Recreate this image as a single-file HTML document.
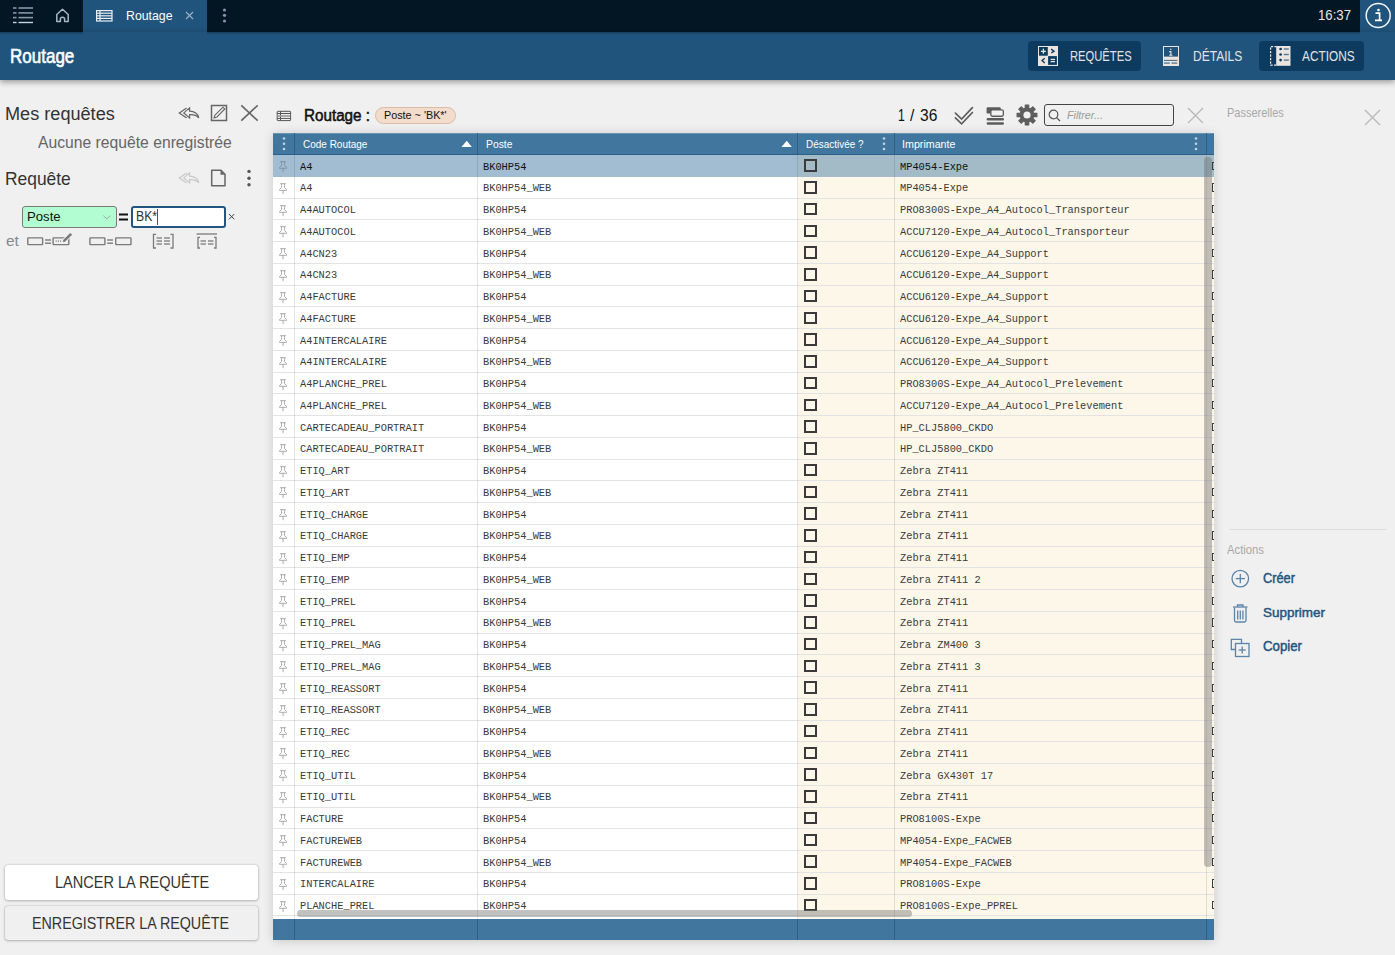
<!DOCTYPE html>
<html><head><meta charset="utf-8">
<style>
*{box-sizing:border-box;margin:0;padding:0}
html,body{width:1395px;height:955px;overflow:hidden;background:#f0f0f0;font-family:"Liberation Sans",sans-serif;position:relative}
.a{position:absolute}
.tx{position:absolute;white-space:nowrap}
svg{overflow:visible}
</style></head><body>
<div class="a" style="left:0px;top:0px;width:1395px;height:32px;background:#021624"></div>
<svg class="a" style="left:0;top:0" width="80" height="32"><g stroke="#8797a8" stroke-width="1.6"><line x1="13" y1="8" x2="16.5" y2="8"/><line x1="18.5" y1="8" x2="33" y2="8"/><line x1="13" y1="12.9" x2="16.5" y2="12.9"/><line x1="18.5" y1="12.9" x2="33" y2="12.9"/><line x1="13" y1="17.6" x2="16.5" y2="17.6"/><line x1="18.5" y1="17.6" x2="33" y2="17.6"/></g><g stroke="#c5d3e0" stroke-width="1.4"><line x1="13" y1="22.5" x2="16.5" y2="22.5"/><line x1="18.5" y1="22.5" x2="33" y2="22.5"/></g><path d="M56.8 21.5 V14.5 L62.5 9.3 L68.2 14.5 V21.5 H64.6 V18.2 Q62.5 16.3 60.4 18.2 V21.5 Z" fill="none" stroke="#a9b6c3" stroke-width="1.5" stroke-linejoin="round"/></svg>
<div class="a" style="left:83px;top:0px;width:124px;height:32px;background:#20547c"></div>
<svg class="a" style="left:94px;top:8px" width="20" height="16"><g fill="none" stroke="#e8eef4" stroke-width="1.2"><rect x="2.6" y="2.6" width="15.4" height="10.4"/><line x1="2.6" y1="5.2" x2="18" y2="5.2"/><line x1="2.6" y1="7.8" x2="18" y2="7.8"/><line x1="2.6" y1="10.4" x2="18" y2="10.4"/><line x1="6" y1="2.6" x2="6" y2="13"/></g></svg>
<div id="t1" class="tx" style='left:125.50px;top:9.00px;font-size:13.23px;line-height:13.23px;color:#ffffff;font-family:"Liberation Sans", sans-serif;font-weight:normal;transform:scaleX(0.9303);transform-origin:0 0;'>Routage</div>
<svg class="a" style="left:184px;top:10px" width="12" height="12"><g stroke="#9fb4c8" stroke-width="1.1"><line x1="2" y1="2" x2="9" y2="9"/><line x1="9" y1="2" x2="2" y2="9"/></g></svg>
<svg class="a" style="left:220px;top:6px" width="10" height="20"><g fill="#8393a4"><circle cx="4.5" cy="4" r="1.6"/><circle cx="4.5" cy="9.3" r="1.6"/><circle cx="4.5" cy="15" r="1.6"/></g></svg>
<div id="t2" class="tx" style='left:1318.00px;top:7.75px;font-size:14.17px;line-height:14.17px;color:#e8e8e8;font-family:"Liberation Sans", sans-serif;font-weight:normal;transform:scaleX(0.9312);transform-origin:0 0;'>16:37</div>
<div class="a" style="left:1360px;top:0px;width:35px;height:32px;background:#20547c"></div>
<svg class="a" style="left:1360px;top:0" width="35" height="32"><circle cx="18.2" cy="15.5" r="12" fill="none" stroke="#f4f6f8" stroke-width="1.5"/><circle cx="18.5" cy="10" r="1.3" fill="#fff"/><path d="M15.5 13.2 H19.6 V20.3 H21.8 M15 20.3 H22" fill="none" stroke="#fff" stroke-width="1.7"/></svg>
<div class="a" style="left:0px;top:32px;width:1395px;height:48px;background:#20547c;box-shadow:0 2px 6px rgba(0,0,0,.38)"></div>
<div class="a" style="left:0px;top:32px;width:83px;height:3px;background:linear-gradient(rgba(0,0,0,.28),rgba(0,0,0,0))"></div>
<div class="a" style="left:207px;top:32px;width:1153px;height:3px;background:linear-gradient(rgba(0,0,0,.28),rgba(0,0,0,0))"></div>
<div id="t3" class="tx" style='left:10.00px;top:46.00px;font-size:20.06px;line-height:20.06px;color:#ffffff;font-family:"Liberation Sans", sans-serif;font-weight:normal;transform:scaleX(0.8483);transform-origin:0 0;-webkit-text-stroke:.6px #fff'>Routage</div>
<div class="a" style="left:1028px;top:41px;width:113px;height:30px;background:#0d3b60;border-radius:4px"></div>
<div class="a" style="left:1259px;top:41px;width:105px;height:30px;background:#0d3b60;border-radius:4px"></div>
<svg class="a" style="left:1038px;top:46px" width="20" height="20"><rect x="0" y="0" width="20" height="20" fill="#ebe4df"/><rect x="1" y="1" width="8.8" height="8.7" fill="#0d3b60"/><rect x="10.1" y="10.1" width="8.8" height="8.8" fill="#0d3b60"/><g stroke="#ebe4df" stroke-width="1.3"><line x1="2.9" y1="5.4" x2="7.9" y2="5.4"/><line x1="5.4" y1="2.7" x2="5.4" y2="7.7"/><line x1="12.6" y1="13.4" x2="17" y2="13.4"/><line x1="12.6" y1="15.6" x2="17" y2="15.6"/></g><g stroke="#0d3b60" stroke-width="1.4" fill="none"><path d="M13.1 3.2 L16 5.2 L13.3 7"/><path d="M6.7 12.3 L4.1 14.6 L6.7 16.9"/></g></svg>
<svg class="a" style="left:1163px;top:46px" width="16" height="20"><rect x="0" y="0" width="16" height="20" fill="#ebe4df"/><rect x="1" y="1" width="14" height="9.6" fill="#20547c"/><circle cx="7.8" cy="3.3" r=".75" fill="#ebe4df"/><path d="M6.2 5.6 H7.9 V9.3 M6.3 9.3 H9.4" stroke="#ebe4df" stroke-width="1.1" fill="none"/><line x1="1" y1="14.4" x2="14.5" y2="14.4" stroke="#3b6789" stroke-width="1"/><g stroke="#5a7d99" stroke-width="1.4"><line x1="1" y1="17.1" x2="6.8" y2="17.1"/><line x1="8.5" y1="17.1" x2="14.3" y2="17.1"/></g></svg>
<svg class="a" style="left:1270px;top:46px" width="21" height="20"><rect x="6.2" y="0" width="14.3" height="19.8" fill="#ebe4df"/><path d="M6.6 0.6 H0.6 V19.2 H6.6" fill="none" stroke="#ebe4df" stroke-width="1.2" stroke-dasharray="2.2 1.3"/><g fill="#0d3b60"><circle cx="10.6" cy="3" r="1.35"/><circle cx="10.6" cy="8.5" r="1.35"/><circle cx="10.6" cy="14.1" r="1.35"/></g><g stroke="#557896" stroke-width="1.4"><line x1="13.8" y1="3" x2="18.8" y2="3"/><line x1="13.8" y1="8.5" x2="18.8" y2="8.5"/><line x1="13.8" y1="14.1" x2="18.8" y2="14.1"/></g></svg>
<div id="t4" class="tx" style='left:1070.00px;top:48.01px;font-size:15.12px;line-height:15.12px;color:#e3e3e3;font-family:"Liberation Sans", sans-serif;font-weight:normal;transform:scaleX(0.7411);transform-origin:0 0;'>REQUÊTES</div>
<div id="t5" class="tx" style='left:1192.60px;top:48.01px;font-size:15.12px;line-height:15.12px;color:#e3e3e3;font-family:"Liberation Sans", sans-serif;font-weight:normal;transform:scaleX(0.7954);transform-origin:0 0;'>DÉTAILS</div>
<div id="t6" class="tx" style='left:1302.00px;top:48.01px;font-size:15.12px;line-height:15.12px;color:#e3e3e3;font-family:"Liberation Sans", sans-serif;font-weight:normal;transform:scaleX(0.7846);transform-origin:0 0;'>ACTIONS</div>
<div id="t7" class="tx" style='left:5.40px;top:104.91px;font-size:18.75px;line-height:18.75px;color:#333;font-family:"Liberation Sans", sans-serif;font-weight:normal;transform:scaleX(0.9665);transform-origin:0 0;'>Mes requêtes</div>
<div id="t8" class="tx" style='left:37.90px;top:134.90px;font-size:15.99px;line-height:15.99px;color:#666;font-family:"Liberation Sans", sans-serif;font-weight:normal;transform:scaleX(0.9818);transform-origin:0 0;'>Aucune requête enregistrée</div>
<div id="t9" class="tx" style='left:5.40px;top:169.51px;font-size:18.17px;line-height:18.17px;color:#333;font-family:"Liberation Sans", sans-serif;font-weight:normal;transform:scaleX(0.9584);transform-origin:0 0;'>Requête</div>
<svg class="a" style="left:178px;top:106px" width="24" height="16"><g fill="none" stroke="#666" stroke-width="1.2" stroke-linejoin="miter"><path d="M8.6 1.9 L1.3 6.9 L8.6 12"/><path d="M11.6 1.9 L5.8 6.9 L11.6 12 V8.6 C15 8.4 18.5 9.2 20.8 11.8 C19.8 7.8 16.5 5.4 11.6 5.2 Z"/></g></svg>
<svg class="a" style="left:210px;top:104px" width="18" height="18"><rect x="1.5" y="1.5" width="15" height="15" fill="none" stroke="#666" stroke-width="1.5"/><path d="M4 14 L5 11 L13 3.2 L14.8 5 L7 13 Z" fill="none" stroke="#666" stroke-width="1.1"/></svg>
<svg class="a" style="left:240px;top:104px" width="19" height="18"><g stroke="#666" stroke-width="1.6"><line x1="1.3" y1="1.3" x2="17.7" y2="16.7"/><line x1="17.7" y1="1.3" x2="1.3" y2="16.7"/></g></svg>
<svg class="a" style="left:177.5px;top:171px" width="24" height="16"><g fill="none" stroke="#c8c8c8" stroke-width="1.2" stroke-linejoin="miter"><path d="M8.6 1.9 L1.3 6.9 L8.6 12"/><path d="M11.6 1.9 L5.8 6.9 L11.6 12 V8.6 C15 8.4 18.5 9.2 20.8 11.8 C19.8 7.8 16.5 5.4 11.6 5.2 Z"/></g></svg>
<svg class="a" style="left:210px;top:169px" width="17" height="18"><path d="M1.7 1.2 H11 L15 5.2 V16.8 H1.7 Z" fill="none" stroke="#666" stroke-width="1.5" stroke-linejoin="round"/><path d="M10.5 1.2 V5.7 H15 Z" fill="#666"/></svg>
<svg class="a" style="left:245px;top:168px" width="8" height="20"><g fill="#555"><circle cx="4" cy="3.4" r="1.7"/><circle cx="4" cy="10.2" r="1.7"/><circle cx="4" cy="16.7" r="1.7"/></g></svg>
<div class="a" style="left:21.5px;top:206px;width:95.5px;height:21.5px;background:#b3fdd2;border:1px solid #7a7a7a;border-radius:3px"></div>
<div id="t10" class="tx" style='left:26.60px;top:210.31px;font-size:13.52px;line-height:13.52px;color:#111;font-family:"Liberation Sans", sans-serif;font-weight:normal;transform:scaleX(0.9722);transform-origin:0 0;'>Poste</div>
<svg class="a" style="left:102px;top:214px" width="10" height="7"><path d="M1.3 1.5 L4.8 5 L8.3 1.5" fill="none" stroke="#9aa" stroke-width="1"/></svg>
<svg class="a" style="left:118px;top:212px" width="12" height="10"><g stroke="#111" stroke-width="2"><line x1="1" y1="2.5" x2="10" y2="2.5"/><line x1="1" y1="7.5" x2="10" y2="7.5"/></g></svg>
<div class="a" style="left:130.5px;top:206px;width:95px;height:21.6px;background:#fff;border:2px solid #22557f;border-radius:3px"></div>
<div id="t11" class="tx" style='left:135.60px;top:209.30px;font-size:14.10px;line-height:14.10px;color:#333;font-family:"Liberation Sans", sans-serif;font-weight:normal;transform:scaleX(0.8684);transform-origin:0 0;'>BK*</div>
<div class="a" style="left:157.3px;top:209px;width:1px;height:16px;background:#555"></div>
<svg class="a" style="left:228px;top:213px" width="8" height="8"><g stroke="#444" stroke-width="1"><line x1="1" y1="1" x2="6.3" y2="6.3"/><line x1="6.3" y1="1" x2="1" y2="6.3"/></g></svg>
<div id="t12" class="tx" style='left:5.70px;top:233.91px;font-size:14.50px;line-height:14.50px;color:#888;font-family:"Liberation Sans", sans-serif;font-weight:normal;transform:scaleX(1.0667);transform-origin:0 0;'>et</div>
<svg class="a" style="left:26px;top:232px" width="48" height="15"><g fill="none" stroke="#7a7a7a" stroke-width="1.4"><rect x="1.8" y="5.9" width="14.8" height="6.7" rx=".5"/><rect x="27.1" y="5.9" width="15.7" height="6.7" rx=".5"/></g><g stroke="#7a7a7a" stroke-width="1.4"><line x1="19" y1="8" x2="25" y2="8"/><line x1="19" y1="11.2" x2="25" y2="11.2"/></g><g fill="#7a7a7a"><rect x="29.6" y="8.5" width="1.2" height="1.2"/><rect x="31.8" y="8.5" width="1.2" height="1.2"/><rect x="34" y="8.5" width="1.2" height="1.2"/></g><path d="M37.6 9.3 L45.3 1.6" stroke="#f0f0f0" stroke-width="4.4"/><path d="M37.8 9.2 L45.2 1.8" stroke="#7a7a7a" stroke-width="2.6"/><path d="M36.8 10.2 L37.4 8.3 L38.8 9.6 Z" fill="#7a7a7a"/></svg>
<svg class="a" style="left:88px;top:232px" width="45" height="15"><g fill="none" stroke="#7a7a7a" stroke-width="1.4"><rect x="1.9" y="5.9" width="15" height="6.7" rx=".5"/><rect x="27.7" y="5.9" width="15.3" height="6.7" rx=".5"/></g><g stroke="#7a7a7a" stroke-width="1.4"><line x1="19.2" y1="8" x2="25" y2="8"/><line x1="19.2" y1="11.2" x2="25" y2="11.2"/></g></svg>
<svg class="a" style="left:152px;top:233px" width="23" height="17"><g fill="none" stroke="#7a7a7a" stroke-width="1.3"><path d="M4 1.3 H1.5 V15 H4"/><path d="M18.5 1.3 H21 V15 H18.5"/><line x1="4.5" y1="5" x2="10" y2="5"/><line x1="4.5" y1="8" x2="10" y2="8"/><line x1="4.5" y1="11" x2="10" y2="11"/><line x1="12" y1="5" x2="18" y2="5"/><line x1="12" y1="8" x2="18" y2="8"/><line x1="12" y1="11" x2="18" y2="11"/></g></svg>
<svg class="a" style="left:196px;top:233px" width="23" height="17"><g fill="none" stroke="#7a7a7a" stroke-width="1.3"><line x1="0.5" y1="1" x2="21" y2="1"/><path d="M4 4.3 H2 V15 H4"/><path d="M18 4.3 H20 V15 H18"/><line x1="4.5" y1="8" x2="10" y2="8"/><line x1="4.5" y1="11" x2="10" y2="11"/><line x1="12" y1="8" x2="17.5" y2="8"/><line x1="12" y1="11" x2="17.5" y2="11"/></g></svg>
<div class="a" style="left:5px;top:864.7px;width:253px;height:35.3px;background:#fff;border-radius:3px;box-shadow:0 0 1.5px rgba(0,0,0,.3),0 1px 3px rgba(0,0,0,.22)"></div>
<div id="t13" class="tx" style='left:54.50px;top:874.10px;font-size:16.28px;line-height:16.28px;color:#333;font-family:"Liberation Sans", sans-serif;font-weight:normal;transform:scaleX(0.8931);transform-origin:0 0;'>LANCER LA REQUÊTE</div>
<div class="a" style="left:5px;top:906px;width:253px;height:34.3px;background:#f0f0f0;border-radius:3px;box-shadow:0 0 1.5px rgba(0,0,0,.3),0 1px 3px rgba(0,0,0,.22)"></div>
<div id="t14" class="tx" style='left:32.40px;top:916.31px;font-size:16.72px;line-height:16.72px;color:#333;font-family:"Liberation Sans", sans-serif;font-weight:normal;transform:scaleX(0.8558);transform-origin:0 0;'>ENREGISTRER LA REQUÊTE</div>
<svg class="a" style="left:276px;top:110px" width="17" height="13"><g fill="none" stroke="#555" stroke-width="1"><rect x="1.2" y="1.3" width="13.4" height="9.3" rx=".6"/><line x1="1.2" y1="3.5" x2="14.6" y2="3.5"/><line x1="1.2" y1="8.4" x2="14.6" y2="8.4"/><line x1="4.5" y1="1.3" x2="4.5" y2="10.6"/></g><line x1="1.5" y1="5.95" x2="14.3" y2="5.95" stroke="#9a9a9a" stroke-width="1.6"/></svg>
<div id="t15" class="tx" style='left:304.40px;top:106.81px;font-size:16.13px;line-height:16.13px;color:#111;font-family:"Liberation Sans", sans-serif;font-weight:normal;transform:scaleX(0.9448);transform-origin:0 0;-webkit-text-stroke:.55px #111'>Routage :</div>
<div class="a" style="left:375px;top:107px;width:80.5px;height:17px;background:#f3dccc;border:1px solid #d9bba8;border-radius:9px"></div>
<div id="t16" class="tx" style='left:383.70px;top:111.21px;font-size:10.17px;line-height:10.17px;color:#111;font-family:"Liberation Sans", sans-serif;font-weight:normal;transform:scaleX(1.0621);transform-origin:0 0;'>Poste ~ 'BK*'</div>
<div id="t17" class="tx" style='left:897.50px;top:107.81px;font-size:15.70px;line-height:15.70px;color:#111;font-family:"Liberation Sans", sans-serif;font-weight:normal;transform:scaleX(0.7785);transform-origin:0 0;'>1</div>
<div id="t18" class="tx" style='left:910.00px;top:107.81px;font-size:15.70px;line-height:15.70px;color:#111;font-family:"Liberation Sans", sans-serif;font-weight:normal;'>/</div>
<div id="t19" class="tx" style='left:920.00px;top:107.81px;font-size:15.70px;line-height:15.70px;color:#111;font-family:"Liberation Sans", sans-serif;font-weight:normal;transform:scaleX(0.9912);transform-origin:0 0;'>36</div>
<svg class="a" style="left:954px;top:106px" width="21" height="20"><g fill="none" stroke="#5e5e5e" stroke-width="1.7" stroke-linecap="round" stroke-linejoin="miter"><path d="M1.4 7.2 L7.6 13 L18.4 1.6"/><path d="M1.4 11.9 L7.6 17.9 L18.4 6.5"/></g></svg>
<svg class="a" style="left:985px;top:106px" width="21" height="20"><rect x="1.6" y="1.2" width="14.2" height="6.4" rx="1.2" fill="#5c5c5c"/><rect x="5.85" y="3.95" width="12.5" height="6.3" rx="1.4" fill="#f4f4f4" stroke="#5c5c5c" stroke-width="1.3"/><rect x="1.6" y="12.1" width="17.4" height="2.4" rx="1.1" fill="#5c5c5c"/><rect x="1.6" y="16.2" width="17.4" height="2.5" rx="1.1" fill="#5c5c5c"/></svg>
<svg class="a" style="left:1014.5px;top:103.4px" width="24" height="24"><g fill="#5e5e5e" transform="translate(12 12)"><circle r="7.4"/><rect x="-2.3" y="-10.45" width="4.6" height="20.9" rx=".4" transform="rotate(0)"/><rect x="-2.3" y="-10.45" width="4.6" height="20.9" rx=".4" transform="rotate(45)"/><rect x="-2.3" y="-10.45" width="4.6" height="20.9" rx=".4" transform="rotate(90)"/><rect x="-2.3" y="-10.45" width="4.6" height="20.9" rx=".4" transform="rotate(135)"/></g><circle cx="12" cy="12" r="3.6" fill="#f0f0f0"/></svg>
<div class="a" style="left:1044px;top:104.3px;width:130px;height:21.5px;border:1.5px solid #444;border-radius:3px"></div>
<svg class="a" style="left:1048px;top:109px" width="14" height="13"><circle cx="5.5" cy="5.5" r="4.3" fill="none" stroke="#555" stroke-width="1.2"/><line x1="8.6" y1="8.6" x2="12" y2="12" stroke="#555" stroke-width="1.3"/></svg>
<div id="t20" class="tx" style='left:1066.50px;top:110.01px;font-size:11.34px;line-height:11.34px;color:#9a9a9a;font-family:"Liberation Sans", sans-serif;font-weight:normal;font-style:italic;transform:scaleX(0.9455);transform-origin:0 0;'>Filtrer...</div>
<svg class="a" style="left:1187px;top:107px" width="17" height="17"><g stroke="#bbb" stroke-width="1.5"><line x1="1" y1="1" x2="16" y2="16"/><line x1="16" y1="1" x2="1" y2="16"/></g></svg>
<div id="t21" class="tx" style='left:1226.60px;top:108.21px;font-size:11.92px;line-height:11.92px;color:#a8a8a8;font-family:"Liberation Sans", sans-serif;font-weight:normal;transform:scaleX(0.9229);transform-origin:0 0;'>Passerelles</div>
<svg class="a" style="left:1364px;top:109px" width="17" height="17"><g stroke="#bbb" stroke-width="1.5"><line x1="1" y1="1" x2="16" y2="16"/><line x1="16" y1="1" x2="1" y2="16"/></g></svg>
<div class="a" style="left:1230px;top:529px;width:156px;height:1.2px;background:#dcdcdc"></div>
<div id="t22" class="tx" style='left:1227.00px;top:545.21px;font-size:11.92px;line-height:11.92px;color:#a8a8a8;font-family:"Liberation Sans", sans-serif;font-weight:normal;transform:scaleX(0.9476);transform-origin:0 0;'>Actions</div>
<svg class="a" style="left:1230px;top:569px" width="20" height="20"><circle cx="10.3" cy="9.6" r="8.3" fill="none" stroke="#5a84a8" stroke-width="1.3"/><g stroke="#5a84a8" stroke-width="1.3"><line x1="10.3" y1="5" x2="10.3" y2="14.2"/><line x1="5.7" y1="9.6" x2="14.9" y2="9.6"/></g></svg>
<div id="t23" class="tx" style='left:1262.80px;top:571.91px;font-size:13.81px;line-height:13.81px;color:#1f5580;font-family:"Liberation Sans", sans-serif;font-weight:normal;transform:scaleX(0.9275);transform-origin:0 0;-webkit-text-stroke:.45px #1f5580'>Créer</div>
<svg class="a" style="left:1231px;top:603px" width="19" height="20"><g fill="none" stroke="#5a84a8" stroke-width="1.3"><path d="M3.5 4.5 V17.5 Q3.5 19 5 19 H13.5 Q15 19 15 17.5 V4.5"/><line x1="2" y1="4" x2="16.5" y2="4"/><path d="M6.5 4 V2 H12 V4"/><line x1="6.7" y1="7.5" x2="6.7" y2="16.5"/><line x1="9.3" y1="7.5" x2="9.3" y2="16.5"/><line x1="11.9" y1="7.5" x2="11.9" y2="16.5"/></g></svg>
<div id="t24" class="tx" style='left:1262.80px;top:607.10px;font-size:12.79px;line-height:12.79px;color:#1f5580;font-family:"Liberation Sans", sans-serif;font-weight:normal;transform:scaleX(1.0514);transform-origin:0 0;-webkit-text-stroke:.45px #1f5580'>Supprimer</div>
<svg class="a" style="left:1229px;top:637px" width="23" height="21"><g fill="none" stroke="#5a84a8" stroke-width="1.3"><path d="M6 12.5 H2.3 V2.3 H12.5 V6"/><rect x="6.5" y="6.5" width="13.5" height="13"/><line x1="13.2" y1="9.5" x2="13.2" y2="16.5"/><line x1="9.7" y1="13" x2="16.7" y2="13"/></g></svg>
<div id="t25" class="tx" style='left:1262.80px;top:640.21px;font-size:13.95px;line-height:13.95px;color:#1f5580;font-family:"Liberation Sans", sans-serif;font-weight:normal;transform:scaleX(0.9498);transform-origin:0 0;-webkit-text-stroke:.45px #1f5580'>Copier</div>
<div class="a" style="left:273px;top:133px;width:941px;height:807.4px;background:#fff;box-shadow:0 1px 10px rgba(0,0,0,.17)"></div>
<div class="a" style="left:273px;top:155px;width:941px;height:764px;overflow:hidden">
<div class="a" style="left:0px;top:0.00px;width:524.5px;height:21.95px;background:#a2bcd2"></div>
<div class="a" style="left:524.5px;top:0.00px;width:416.5px;height:21.95px;background:#a3bac7"></div>
<div class="tx" style='left:26.60px;top:5.71px;font-size:11.60px;line-height:11.60px;color:#111;font-family:"Liberation Mono", monospace;transform:scaleX(0.8922);transform-origin:0 0'>A4</div>
<div class="tx" style='left:209.90px;top:5.71px;font-size:11.60px;line-height:11.60px;color:#111;font-family:"Liberation Mono", monospace;transform:scaleX(0.8922);transform-origin:0 0'>BK0HP54</div>
<div class="tx" style='left:626.90px;top:5.71px;font-size:11.60px;line-height:11.60px;color:#111;font-family:"Liberation Mono", monospace;transform:scaleX(0.8922);transform-origin:0 0'>MP4054-Expe</div>
<svg class="a" style="left:0;top:0.00px" width="21" height="21"><path d="M7.2 6.7 H12.8 M8.6 6.7 Q8.4 8.5 8.6 10.4 L6.5 12.6 V13.3 H13.6 V12.6 L11.5 10.4 Q11.7 8.5 11.5 6.7 M10.05 13.3 V17.2" fill="none" stroke="#7f93a6" stroke-width="1"/></svg>
<div class="a" style="left:531.2px;top:4.40px;width:12.6px;height:12.6px;border:2.1px solid #3a3a3a;box-sizing:border-box"></div>
<div class="a" style="left:939.2px;top:6.60px;width:3px;height:8.4px;border-left:1.7px solid #3a3a3a;border-top:1.2px solid #3a3a3a;border-bottom:1.2px solid #3a3a3a"></div>
<div class="a" style="left:524.5px;top:21.75px;width:416.5px;height:21.75px;background:#fdf7e9"></div>
<div class="a" style="left:0px;top:42.50px;width:941px;height:1px;background:#e3e3e3"></div>
<div class="tx" style='left:26.60px;top:27.46px;font-size:11.60px;line-height:11.60px;color:#3a3a3a;font-family:"Liberation Mono", monospace;transform:scaleX(0.8922);transform-origin:0 0'>A4</div>
<div class="tx" style='left:209.90px;top:27.46px;font-size:11.60px;line-height:11.60px;color:#3a3a3a;font-family:"Liberation Mono", monospace;transform:scaleX(0.8922);transform-origin:0 0'>BK0HP54_WEB</div>
<div class="tx" style='left:626.90px;top:27.46px;font-size:11.60px;line-height:11.60px;color:#3a3a3a;font-family:"Liberation Mono", monospace;transform:scaleX(0.8922);transform-origin:0 0'>MP4054-Expe</div>
<svg class="a" style="left:0;top:21.75px" width="21" height="21"><path d="M7.2 6.7 H12.8 M8.6 6.7 Q8.4 8.5 8.6 10.4 L6.5 12.6 V13.3 H13.6 V12.6 L11.5 10.4 Q11.7 8.5 11.5 6.7 M10.05 13.3 V17.2" fill="none" stroke="#a9a9a9" stroke-width="1"/></svg>
<div class="a" style="left:531.2px;top:26.15px;width:12.6px;height:12.6px;border:2.1px solid #3a3a3a;box-sizing:border-box"></div>
<div class="a" style="left:939.2px;top:28.35px;width:3px;height:8.4px;border-left:1.7px solid #3a3a3a;border-top:1.2px solid #3a3a3a;border-bottom:1.2px solid #3a3a3a"></div>
<div class="a" style="left:524.5px;top:43.50px;width:416.5px;height:21.75px;background:#fdf7e9"></div>
<div class="a" style="left:0px;top:64.25px;width:941px;height:1px;background:#e3e3e3"></div>
<div class="tx" style='left:26.60px;top:49.21px;font-size:11.60px;line-height:11.60px;color:#3a3a3a;font-family:"Liberation Mono", monospace;transform:scaleX(0.8922);transform-origin:0 0'>A4AUTOCOL</div>
<div class="tx" style='left:209.90px;top:49.21px;font-size:11.60px;line-height:11.60px;color:#3a3a3a;font-family:"Liberation Mono", monospace;transform:scaleX(0.8922);transform-origin:0 0'>BK0HP54</div>
<div class="tx" style='left:626.90px;top:49.21px;font-size:11.60px;line-height:11.60px;color:#3a3a3a;font-family:"Liberation Mono", monospace;transform:scaleX(0.8922);transform-origin:0 0'>PRO8300S-Expe_A4_Autocol_Transporteur</div>
<svg class="a" style="left:0;top:43.50px" width="21" height="21"><path d="M7.2 6.7 H12.8 M8.6 6.7 Q8.4 8.5 8.6 10.4 L6.5 12.6 V13.3 H13.6 V12.6 L11.5 10.4 Q11.7 8.5 11.5 6.7 M10.05 13.3 V17.2" fill="none" stroke="#a9a9a9" stroke-width="1"/></svg>
<div class="a" style="left:531.2px;top:47.90px;width:12.6px;height:12.6px;border:2.1px solid #3a3a3a;box-sizing:border-box"></div>
<div class="a" style="left:939.2px;top:50.10px;width:3px;height:8.4px;border-left:1.7px solid #3a3a3a;border-top:1.2px solid #3a3a3a;border-bottom:1.2px solid #3a3a3a"></div>
<div class="a" style="left:524.5px;top:65.25px;width:416.5px;height:21.75px;background:#fdf7e9"></div>
<div class="a" style="left:0px;top:86.00px;width:941px;height:1px;background:#e3e3e3"></div>
<div class="tx" style='left:26.60px;top:70.96px;font-size:11.60px;line-height:11.60px;color:#3a3a3a;font-family:"Liberation Mono", monospace;transform:scaleX(0.8922);transform-origin:0 0'>A4AUTOCOL</div>
<div class="tx" style='left:209.90px;top:70.96px;font-size:11.60px;line-height:11.60px;color:#3a3a3a;font-family:"Liberation Mono", monospace;transform:scaleX(0.8922);transform-origin:0 0'>BK0HP54_WEB</div>
<div class="tx" style='left:626.90px;top:70.96px;font-size:11.60px;line-height:11.60px;color:#3a3a3a;font-family:"Liberation Mono", monospace;transform:scaleX(0.8922);transform-origin:0 0'>ACCU7120-Expe_A4_Autocol_Transporteur</div>
<svg class="a" style="left:0;top:65.25px" width="21" height="21"><path d="M7.2 6.7 H12.8 M8.6 6.7 Q8.4 8.5 8.6 10.4 L6.5 12.6 V13.3 H13.6 V12.6 L11.5 10.4 Q11.7 8.5 11.5 6.7 M10.05 13.3 V17.2" fill="none" stroke="#a9a9a9" stroke-width="1"/></svg>
<div class="a" style="left:531.2px;top:69.65px;width:12.6px;height:12.6px;border:2.1px solid #3a3a3a;box-sizing:border-box"></div>
<div class="a" style="left:939.2px;top:71.85px;width:3px;height:8.4px;border-left:1.7px solid #3a3a3a;border-top:1.2px solid #3a3a3a;border-bottom:1.2px solid #3a3a3a"></div>
<div class="a" style="left:524.5px;top:87.00px;width:416.5px;height:21.75px;background:#fdf7e9"></div>
<div class="a" style="left:0px;top:107.75px;width:941px;height:1px;background:#e3e3e3"></div>
<div class="tx" style='left:26.60px;top:92.71px;font-size:11.60px;line-height:11.60px;color:#3a3a3a;font-family:"Liberation Mono", monospace;transform:scaleX(0.8922);transform-origin:0 0'>A4CN23</div>
<div class="tx" style='left:209.90px;top:92.71px;font-size:11.60px;line-height:11.60px;color:#3a3a3a;font-family:"Liberation Mono", monospace;transform:scaleX(0.8922);transform-origin:0 0'>BK0HP54</div>
<div class="tx" style='left:626.90px;top:92.71px;font-size:11.60px;line-height:11.60px;color:#3a3a3a;font-family:"Liberation Mono", monospace;transform:scaleX(0.8922);transform-origin:0 0'>ACCU6120-Expe_A4_Support</div>
<svg class="a" style="left:0;top:87.00px" width="21" height="21"><path d="M7.2 6.7 H12.8 M8.6 6.7 Q8.4 8.5 8.6 10.4 L6.5 12.6 V13.3 H13.6 V12.6 L11.5 10.4 Q11.7 8.5 11.5 6.7 M10.05 13.3 V17.2" fill="none" stroke="#a9a9a9" stroke-width="1"/></svg>
<div class="a" style="left:531.2px;top:91.40px;width:12.6px;height:12.6px;border:2.1px solid #3a3a3a;box-sizing:border-box"></div>
<div class="a" style="left:939.2px;top:93.60px;width:3px;height:8.4px;border-left:1.7px solid #3a3a3a;border-top:1.2px solid #3a3a3a;border-bottom:1.2px solid #3a3a3a"></div>
<div class="a" style="left:524.5px;top:108.75px;width:416.5px;height:21.75px;background:#fdf7e9"></div>
<div class="a" style="left:0px;top:129.50px;width:941px;height:1px;background:#e3e3e3"></div>
<div class="tx" style='left:26.60px;top:114.46px;font-size:11.60px;line-height:11.60px;color:#3a3a3a;font-family:"Liberation Mono", monospace;transform:scaleX(0.8922);transform-origin:0 0'>A4CN23</div>
<div class="tx" style='left:209.90px;top:114.46px;font-size:11.60px;line-height:11.60px;color:#3a3a3a;font-family:"Liberation Mono", monospace;transform:scaleX(0.8922);transform-origin:0 0'>BK0HP54_WEB</div>
<div class="tx" style='left:626.90px;top:114.46px;font-size:11.60px;line-height:11.60px;color:#3a3a3a;font-family:"Liberation Mono", monospace;transform:scaleX(0.8922);transform-origin:0 0'>ACCU6120-Expe_A4_Support</div>
<svg class="a" style="left:0;top:108.75px" width="21" height="21"><path d="M7.2 6.7 H12.8 M8.6 6.7 Q8.4 8.5 8.6 10.4 L6.5 12.6 V13.3 H13.6 V12.6 L11.5 10.4 Q11.7 8.5 11.5 6.7 M10.05 13.3 V17.2" fill="none" stroke="#a9a9a9" stroke-width="1"/></svg>
<div class="a" style="left:531.2px;top:113.15px;width:12.6px;height:12.6px;border:2.1px solid #3a3a3a;box-sizing:border-box"></div>
<div class="a" style="left:939.2px;top:115.35px;width:3px;height:8.4px;border-left:1.7px solid #3a3a3a;border-top:1.2px solid #3a3a3a;border-bottom:1.2px solid #3a3a3a"></div>
<div class="a" style="left:524.5px;top:130.50px;width:416.5px;height:21.75px;background:#fdf7e9"></div>
<div class="a" style="left:0px;top:151.25px;width:941px;height:1px;background:#e3e3e3"></div>
<div class="tx" style='left:26.60px;top:136.21px;font-size:11.60px;line-height:11.60px;color:#3a3a3a;font-family:"Liberation Mono", monospace;transform:scaleX(0.8922);transform-origin:0 0'>A4FACTURE</div>
<div class="tx" style='left:209.90px;top:136.21px;font-size:11.60px;line-height:11.60px;color:#3a3a3a;font-family:"Liberation Mono", monospace;transform:scaleX(0.8922);transform-origin:0 0'>BK0HP54</div>
<div class="tx" style='left:626.90px;top:136.21px;font-size:11.60px;line-height:11.60px;color:#3a3a3a;font-family:"Liberation Mono", monospace;transform:scaleX(0.8922);transform-origin:0 0'>ACCU6120-Expe_A4_Support</div>
<svg class="a" style="left:0;top:130.50px" width="21" height="21"><path d="M7.2 6.7 H12.8 M8.6 6.7 Q8.4 8.5 8.6 10.4 L6.5 12.6 V13.3 H13.6 V12.6 L11.5 10.4 Q11.7 8.5 11.5 6.7 M10.05 13.3 V17.2" fill="none" stroke="#a9a9a9" stroke-width="1"/></svg>
<div class="a" style="left:531.2px;top:134.90px;width:12.6px;height:12.6px;border:2.1px solid #3a3a3a;box-sizing:border-box"></div>
<div class="a" style="left:939.2px;top:137.10px;width:3px;height:8.4px;border-left:1.7px solid #3a3a3a;border-top:1.2px solid #3a3a3a;border-bottom:1.2px solid #3a3a3a"></div>
<div class="a" style="left:524.5px;top:152.25px;width:416.5px;height:21.75px;background:#fdf7e9"></div>
<div class="a" style="left:0px;top:173.00px;width:941px;height:1px;background:#e3e3e3"></div>
<div class="tx" style='left:26.60px;top:157.96px;font-size:11.60px;line-height:11.60px;color:#3a3a3a;font-family:"Liberation Mono", monospace;transform:scaleX(0.8922);transform-origin:0 0'>A4FACTURE</div>
<div class="tx" style='left:209.90px;top:157.96px;font-size:11.60px;line-height:11.60px;color:#3a3a3a;font-family:"Liberation Mono", monospace;transform:scaleX(0.8922);transform-origin:0 0'>BK0HP54_WEB</div>
<div class="tx" style='left:626.90px;top:157.96px;font-size:11.60px;line-height:11.60px;color:#3a3a3a;font-family:"Liberation Mono", monospace;transform:scaleX(0.8922);transform-origin:0 0'>ACCU6120-Expe_A4_Support</div>
<svg class="a" style="left:0;top:152.25px" width="21" height="21"><path d="M7.2 6.7 H12.8 M8.6 6.7 Q8.4 8.5 8.6 10.4 L6.5 12.6 V13.3 H13.6 V12.6 L11.5 10.4 Q11.7 8.5 11.5 6.7 M10.05 13.3 V17.2" fill="none" stroke="#a9a9a9" stroke-width="1"/></svg>
<div class="a" style="left:531.2px;top:156.65px;width:12.6px;height:12.6px;border:2.1px solid #3a3a3a;box-sizing:border-box"></div>
<div class="a" style="left:939.2px;top:158.85px;width:3px;height:8.4px;border-left:1.7px solid #3a3a3a;border-top:1.2px solid #3a3a3a;border-bottom:1.2px solid #3a3a3a"></div>
<div class="a" style="left:524.5px;top:174.00px;width:416.5px;height:21.75px;background:#fdf7e9"></div>
<div class="a" style="left:0px;top:194.75px;width:941px;height:1px;background:#e3e3e3"></div>
<div class="tx" style='left:26.60px;top:179.71px;font-size:11.60px;line-height:11.60px;color:#3a3a3a;font-family:"Liberation Mono", monospace;transform:scaleX(0.8922);transform-origin:0 0'>A4INTERCALAIRE</div>
<div class="tx" style='left:209.90px;top:179.71px;font-size:11.60px;line-height:11.60px;color:#3a3a3a;font-family:"Liberation Mono", monospace;transform:scaleX(0.8922);transform-origin:0 0'>BK0HP54</div>
<div class="tx" style='left:626.90px;top:179.71px;font-size:11.60px;line-height:11.60px;color:#3a3a3a;font-family:"Liberation Mono", monospace;transform:scaleX(0.8922);transform-origin:0 0'>ACCU6120-Expe_A4_Support</div>
<svg class="a" style="left:0;top:174.00px" width="21" height="21"><path d="M7.2 6.7 H12.8 M8.6 6.7 Q8.4 8.5 8.6 10.4 L6.5 12.6 V13.3 H13.6 V12.6 L11.5 10.4 Q11.7 8.5 11.5 6.7 M10.05 13.3 V17.2" fill="none" stroke="#a9a9a9" stroke-width="1"/></svg>
<div class="a" style="left:531.2px;top:178.40px;width:12.6px;height:12.6px;border:2.1px solid #3a3a3a;box-sizing:border-box"></div>
<div class="a" style="left:939.2px;top:180.60px;width:3px;height:8.4px;border-left:1.7px solid #3a3a3a;border-top:1.2px solid #3a3a3a;border-bottom:1.2px solid #3a3a3a"></div>
<div class="a" style="left:524.5px;top:195.75px;width:416.5px;height:21.75px;background:#fdf7e9"></div>
<div class="a" style="left:0px;top:216.50px;width:941px;height:1px;background:#e3e3e3"></div>
<div class="tx" style='left:26.60px;top:201.46px;font-size:11.60px;line-height:11.60px;color:#3a3a3a;font-family:"Liberation Mono", monospace;transform:scaleX(0.8922);transform-origin:0 0'>A4INTERCALAIRE</div>
<div class="tx" style='left:209.90px;top:201.46px;font-size:11.60px;line-height:11.60px;color:#3a3a3a;font-family:"Liberation Mono", monospace;transform:scaleX(0.8922);transform-origin:0 0'>BK0HP54_WEB</div>
<div class="tx" style='left:626.90px;top:201.46px;font-size:11.60px;line-height:11.60px;color:#3a3a3a;font-family:"Liberation Mono", monospace;transform:scaleX(0.8922);transform-origin:0 0'>ACCU6120-Expe_A4_Support</div>
<svg class="a" style="left:0;top:195.75px" width="21" height="21"><path d="M7.2 6.7 H12.8 M8.6 6.7 Q8.4 8.5 8.6 10.4 L6.5 12.6 V13.3 H13.6 V12.6 L11.5 10.4 Q11.7 8.5 11.5 6.7 M10.05 13.3 V17.2" fill="none" stroke="#a9a9a9" stroke-width="1"/></svg>
<div class="a" style="left:531.2px;top:200.15px;width:12.6px;height:12.6px;border:2.1px solid #3a3a3a;box-sizing:border-box"></div>
<div class="a" style="left:939.2px;top:202.35px;width:3px;height:8.4px;border-left:1.7px solid #3a3a3a;border-top:1.2px solid #3a3a3a;border-bottom:1.2px solid #3a3a3a"></div>
<div class="a" style="left:524.5px;top:217.50px;width:416.5px;height:21.75px;background:#fdf7e9"></div>
<div class="a" style="left:0px;top:238.25px;width:941px;height:1px;background:#e3e3e3"></div>
<div class="tx" style='left:26.60px;top:223.21px;font-size:11.60px;line-height:11.60px;color:#3a3a3a;font-family:"Liberation Mono", monospace;transform:scaleX(0.8922);transform-origin:0 0'>A4PLANCHE_PREL</div>
<div class="tx" style='left:209.90px;top:223.21px;font-size:11.60px;line-height:11.60px;color:#3a3a3a;font-family:"Liberation Mono", monospace;transform:scaleX(0.8922);transform-origin:0 0'>BK0HP54</div>
<div class="tx" style='left:626.90px;top:223.21px;font-size:11.60px;line-height:11.60px;color:#3a3a3a;font-family:"Liberation Mono", monospace;transform:scaleX(0.8922);transform-origin:0 0'>PRO8300S-Expe_A4_Autocol_Prelevement</div>
<svg class="a" style="left:0;top:217.50px" width="21" height="21"><path d="M7.2 6.7 H12.8 M8.6 6.7 Q8.4 8.5 8.6 10.4 L6.5 12.6 V13.3 H13.6 V12.6 L11.5 10.4 Q11.7 8.5 11.5 6.7 M10.05 13.3 V17.2" fill="none" stroke="#a9a9a9" stroke-width="1"/></svg>
<div class="a" style="left:531.2px;top:221.90px;width:12.6px;height:12.6px;border:2.1px solid #3a3a3a;box-sizing:border-box"></div>
<div class="a" style="left:939.2px;top:224.10px;width:3px;height:8.4px;border-left:1.7px solid #3a3a3a;border-top:1.2px solid #3a3a3a;border-bottom:1.2px solid #3a3a3a"></div>
<div class="a" style="left:524.5px;top:239.25px;width:416.5px;height:21.75px;background:#fdf7e9"></div>
<div class="a" style="left:0px;top:260.00px;width:941px;height:1px;background:#e3e3e3"></div>
<div class="tx" style='left:26.60px;top:244.96px;font-size:11.60px;line-height:11.60px;color:#3a3a3a;font-family:"Liberation Mono", monospace;transform:scaleX(0.8922);transform-origin:0 0'>A4PLANCHE_PREL</div>
<div class="tx" style='left:209.90px;top:244.96px;font-size:11.60px;line-height:11.60px;color:#3a3a3a;font-family:"Liberation Mono", monospace;transform:scaleX(0.8922);transform-origin:0 0'>BK0HP54_WEB</div>
<div class="tx" style='left:626.90px;top:244.96px;font-size:11.60px;line-height:11.60px;color:#3a3a3a;font-family:"Liberation Mono", monospace;transform:scaleX(0.8922);transform-origin:0 0'>ACCU7120-Expe_A4_Autocol_Prelevement</div>
<svg class="a" style="left:0;top:239.25px" width="21" height="21"><path d="M7.2 6.7 H12.8 M8.6 6.7 Q8.4 8.5 8.6 10.4 L6.5 12.6 V13.3 H13.6 V12.6 L11.5 10.4 Q11.7 8.5 11.5 6.7 M10.05 13.3 V17.2" fill="none" stroke="#a9a9a9" stroke-width="1"/></svg>
<div class="a" style="left:531.2px;top:243.65px;width:12.6px;height:12.6px;border:2.1px solid #3a3a3a;box-sizing:border-box"></div>
<div class="a" style="left:939.2px;top:245.85px;width:3px;height:8.4px;border-left:1.7px solid #3a3a3a;border-top:1.2px solid #3a3a3a;border-bottom:1.2px solid #3a3a3a"></div>
<div class="a" style="left:524.5px;top:261.00px;width:416.5px;height:21.75px;background:#fdf7e9"></div>
<div class="a" style="left:0px;top:281.75px;width:941px;height:1px;background:#e3e3e3"></div>
<div class="tx" style='left:26.60px;top:266.71px;font-size:11.60px;line-height:11.60px;color:#3a3a3a;font-family:"Liberation Mono", monospace;transform:scaleX(0.8922);transform-origin:0 0'>CARTECADEAU_PORTRAIT</div>
<div class="tx" style='left:209.90px;top:266.71px;font-size:11.60px;line-height:11.60px;color:#3a3a3a;font-family:"Liberation Mono", monospace;transform:scaleX(0.8922);transform-origin:0 0'>BK0HP54</div>
<div class="tx" style='left:626.90px;top:266.71px;font-size:11.60px;line-height:11.60px;color:#3a3a3a;font-family:"Liberation Mono", monospace;transform:scaleX(0.8922);transform-origin:0 0'>HP_CLJ5800_CKDO</div>
<svg class="a" style="left:0;top:261.00px" width="21" height="21"><path d="M7.2 6.7 H12.8 M8.6 6.7 Q8.4 8.5 8.6 10.4 L6.5 12.6 V13.3 H13.6 V12.6 L11.5 10.4 Q11.7 8.5 11.5 6.7 M10.05 13.3 V17.2" fill="none" stroke="#a9a9a9" stroke-width="1"/></svg>
<div class="a" style="left:531.2px;top:265.40px;width:12.6px;height:12.6px;border:2.1px solid #3a3a3a;box-sizing:border-box"></div>
<div class="a" style="left:939.2px;top:267.60px;width:3px;height:8.4px;border-left:1.7px solid #3a3a3a;border-top:1.2px solid #3a3a3a;border-bottom:1.2px solid #3a3a3a"></div>
<div class="a" style="left:524.5px;top:282.75px;width:416.5px;height:21.75px;background:#fdf7e9"></div>
<div class="a" style="left:0px;top:303.50px;width:941px;height:1px;background:#e3e3e3"></div>
<div class="tx" style='left:26.60px;top:288.46px;font-size:11.60px;line-height:11.60px;color:#3a3a3a;font-family:"Liberation Mono", monospace;transform:scaleX(0.8922);transform-origin:0 0'>CARTECADEAU_PORTRAIT</div>
<div class="tx" style='left:209.90px;top:288.46px;font-size:11.60px;line-height:11.60px;color:#3a3a3a;font-family:"Liberation Mono", monospace;transform:scaleX(0.8922);transform-origin:0 0'>BK0HP54_WEB</div>
<div class="tx" style='left:626.90px;top:288.46px;font-size:11.60px;line-height:11.60px;color:#3a3a3a;font-family:"Liberation Mono", monospace;transform:scaleX(0.8922);transform-origin:0 0'>HP_CLJ5800_CKDO</div>
<svg class="a" style="left:0;top:282.75px" width="21" height="21"><path d="M7.2 6.7 H12.8 M8.6 6.7 Q8.4 8.5 8.6 10.4 L6.5 12.6 V13.3 H13.6 V12.6 L11.5 10.4 Q11.7 8.5 11.5 6.7 M10.05 13.3 V17.2" fill="none" stroke="#a9a9a9" stroke-width="1"/></svg>
<div class="a" style="left:531.2px;top:287.15px;width:12.6px;height:12.6px;border:2.1px solid #3a3a3a;box-sizing:border-box"></div>
<div class="a" style="left:939.2px;top:289.35px;width:3px;height:8.4px;border-left:1.7px solid #3a3a3a;border-top:1.2px solid #3a3a3a;border-bottom:1.2px solid #3a3a3a"></div>
<div class="a" style="left:524.5px;top:304.50px;width:416.5px;height:21.75px;background:#fdf7e9"></div>
<div class="a" style="left:0px;top:325.25px;width:941px;height:1px;background:#e3e3e3"></div>
<div class="tx" style='left:26.60px;top:310.21px;font-size:11.60px;line-height:11.60px;color:#3a3a3a;font-family:"Liberation Mono", monospace;transform:scaleX(0.8922);transform-origin:0 0'>ETIQ_ART</div>
<div class="tx" style='left:209.90px;top:310.21px;font-size:11.60px;line-height:11.60px;color:#3a3a3a;font-family:"Liberation Mono", monospace;transform:scaleX(0.8922);transform-origin:0 0'>BK0HP54</div>
<div class="tx" style='left:626.90px;top:310.21px;font-size:11.60px;line-height:11.60px;color:#3a3a3a;font-family:"Liberation Mono", monospace;transform:scaleX(0.8922);transform-origin:0 0'>Zebra ZT411</div>
<svg class="a" style="left:0;top:304.50px" width="21" height="21"><path d="M7.2 6.7 H12.8 M8.6 6.7 Q8.4 8.5 8.6 10.4 L6.5 12.6 V13.3 H13.6 V12.6 L11.5 10.4 Q11.7 8.5 11.5 6.7 M10.05 13.3 V17.2" fill="none" stroke="#a9a9a9" stroke-width="1"/></svg>
<div class="a" style="left:531.2px;top:308.90px;width:12.6px;height:12.6px;border:2.1px solid #3a3a3a;box-sizing:border-box"></div>
<div class="a" style="left:939.2px;top:311.10px;width:3px;height:8.4px;border-left:1.7px solid #3a3a3a;border-top:1.2px solid #3a3a3a;border-bottom:1.2px solid #3a3a3a"></div>
<div class="a" style="left:524.5px;top:326.25px;width:416.5px;height:21.75px;background:#fdf7e9"></div>
<div class="a" style="left:0px;top:347.00px;width:941px;height:1px;background:#e3e3e3"></div>
<div class="tx" style='left:26.60px;top:331.96px;font-size:11.60px;line-height:11.60px;color:#3a3a3a;font-family:"Liberation Mono", monospace;transform:scaleX(0.8922);transform-origin:0 0'>ETIQ_ART</div>
<div class="tx" style='left:209.90px;top:331.96px;font-size:11.60px;line-height:11.60px;color:#3a3a3a;font-family:"Liberation Mono", monospace;transform:scaleX(0.8922);transform-origin:0 0'>BK0HP54_WEB</div>
<div class="tx" style='left:626.90px;top:331.96px;font-size:11.60px;line-height:11.60px;color:#3a3a3a;font-family:"Liberation Mono", monospace;transform:scaleX(0.8922);transform-origin:0 0'>Zebra ZT411</div>
<svg class="a" style="left:0;top:326.25px" width="21" height="21"><path d="M7.2 6.7 H12.8 M8.6 6.7 Q8.4 8.5 8.6 10.4 L6.5 12.6 V13.3 H13.6 V12.6 L11.5 10.4 Q11.7 8.5 11.5 6.7 M10.05 13.3 V17.2" fill="none" stroke="#a9a9a9" stroke-width="1"/></svg>
<div class="a" style="left:531.2px;top:330.65px;width:12.6px;height:12.6px;border:2.1px solid #3a3a3a;box-sizing:border-box"></div>
<div class="a" style="left:939.2px;top:332.85px;width:3px;height:8.4px;border-left:1.7px solid #3a3a3a;border-top:1.2px solid #3a3a3a;border-bottom:1.2px solid #3a3a3a"></div>
<div class="a" style="left:524.5px;top:348.00px;width:416.5px;height:21.75px;background:#fdf7e9"></div>
<div class="a" style="left:0px;top:368.75px;width:941px;height:1px;background:#e3e3e3"></div>
<div class="tx" style='left:26.60px;top:353.71px;font-size:11.60px;line-height:11.60px;color:#3a3a3a;font-family:"Liberation Mono", monospace;transform:scaleX(0.8922);transform-origin:0 0'>ETIQ_CHARGE</div>
<div class="tx" style='left:209.90px;top:353.71px;font-size:11.60px;line-height:11.60px;color:#3a3a3a;font-family:"Liberation Mono", monospace;transform:scaleX(0.8922);transform-origin:0 0'>BK0HP54</div>
<div class="tx" style='left:626.90px;top:353.71px;font-size:11.60px;line-height:11.60px;color:#3a3a3a;font-family:"Liberation Mono", monospace;transform:scaleX(0.8922);transform-origin:0 0'>Zebra ZT411</div>
<svg class="a" style="left:0;top:348.00px" width="21" height="21"><path d="M7.2 6.7 H12.8 M8.6 6.7 Q8.4 8.5 8.6 10.4 L6.5 12.6 V13.3 H13.6 V12.6 L11.5 10.4 Q11.7 8.5 11.5 6.7 M10.05 13.3 V17.2" fill="none" stroke="#a9a9a9" stroke-width="1"/></svg>
<div class="a" style="left:531.2px;top:352.40px;width:12.6px;height:12.6px;border:2.1px solid #3a3a3a;box-sizing:border-box"></div>
<div class="a" style="left:939.2px;top:354.60px;width:3px;height:8.4px;border-left:1.7px solid #3a3a3a;border-top:1.2px solid #3a3a3a;border-bottom:1.2px solid #3a3a3a"></div>
<div class="a" style="left:524.5px;top:369.75px;width:416.5px;height:21.75px;background:#fdf7e9"></div>
<div class="a" style="left:0px;top:390.50px;width:941px;height:1px;background:#e3e3e3"></div>
<div class="tx" style='left:26.60px;top:375.46px;font-size:11.60px;line-height:11.60px;color:#3a3a3a;font-family:"Liberation Mono", monospace;transform:scaleX(0.8922);transform-origin:0 0'>ETIQ_CHARGE</div>
<div class="tx" style='left:209.90px;top:375.46px;font-size:11.60px;line-height:11.60px;color:#3a3a3a;font-family:"Liberation Mono", monospace;transform:scaleX(0.8922);transform-origin:0 0'>BK0HP54_WEB</div>
<div class="tx" style='left:626.90px;top:375.46px;font-size:11.60px;line-height:11.60px;color:#3a3a3a;font-family:"Liberation Mono", monospace;transform:scaleX(0.8922);transform-origin:0 0'>Zebra ZT411</div>
<svg class="a" style="left:0;top:369.75px" width="21" height="21"><path d="M7.2 6.7 H12.8 M8.6 6.7 Q8.4 8.5 8.6 10.4 L6.5 12.6 V13.3 H13.6 V12.6 L11.5 10.4 Q11.7 8.5 11.5 6.7 M10.05 13.3 V17.2" fill="none" stroke="#a9a9a9" stroke-width="1"/></svg>
<div class="a" style="left:531.2px;top:374.15px;width:12.6px;height:12.6px;border:2.1px solid #3a3a3a;box-sizing:border-box"></div>
<div class="a" style="left:939.2px;top:376.35px;width:3px;height:8.4px;border-left:1.7px solid #3a3a3a;border-top:1.2px solid #3a3a3a;border-bottom:1.2px solid #3a3a3a"></div>
<div class="a" style="left:524.5px;top:391.50px;width:416.5px;height:21.75px;background:#fdf7e9"></div>
<div class="a" style="left:0px;top:412.25px;width:941px;height:1px;background:#e3e3e3"></div>
<div class="tx" style='left:26.60px;top:397.21px;font-size:11.60px;line-height:11.60px;color:#3a3a3a;font-family:"Liberation Mono", monospace;transform:scaleX(0.8922);transform-origin:0 0'>ETIQ_EMP</div>
<div class="tx" style='left:209.90px;top:397.21px;font-size:11.60px;line-height:11.60px;color:#3a3a3a;font-family:"Liberation Mono", monospace;transform:scaleX(0.8922);transform-origin:0 0'>BK0HP54</div>
<div class="tx" style='left:626.90px;top:397.21px;font-size:11.60px;line-height:11.60px;color:#3a3a3a;font-family:"Liberation Mono", monospace;transform:scaleX(0.8922);transform-origin:0 0'>Zebra ZT411</div>
<svg class="a" style="left:0;top:391.50px" width="21" height="21"><path d="M7.2 6.7 H12.8 M8.6 6.7 Q8.4 8.5 8.6 10.4 L6.5 12.6 V13.3 H13.6 V12.6 L11.5 10.4 Q11.7 8.5 11.5 6.7 M10.05 13.3 V17.2" fill="none" stroke="#a9a9a9" stroke-width="1"/></svg>
<div class="a" style="left:531.2px;top:395.90px;width:12.6px;height:12.6px;border:2.1px solid #3a3a3a;box-sizing:border-box"></div>
<div class="a" style="left:939.2px;top:398.10px;width:3px;height:8.4px;border-left:1.7px solid #3a3a3a;border-top:1.2px solid #3a3a3a;border-bottom:1.2px solid #3a3a3a"></div>
<div class="a" style="left:524.5px;top:413.25px;width:416.5px;height:21.75px;background:#fdf7e9"></div>
<div class="a" style="left:0px;top:434.00px;width:941px;height:1px;background:#e3e3e3"></div>
<div class="tx" style='left:26.60px;top:418.96px;font-size:11.60px;line-height:11.60px;color:#3a3a3a;font-family:"Liberation Mono", monospace;transform:scaleX(0.8922);transform-origin:0 0'>ETIQ_EMP</div>
<div class="tx" style='left:209.90px;top:418.96px;font-size:11.60px;line-height:11.60px;color:#3a3a3a;font-family:"Liberation Mono", monospace;transform:scaleX(0.8922);transform-origin:0 0'>BK0HP54_WEB</div>
<div class="tx" style='left:626.90px;top:418.96px;font-size:11.60px;line-height:11.60px;color:#3a3a3a;font-family:"Liberation Mono", monospace;transform:scaleX(0.8922);transform-origin:0 0'>Zebra ZT411 2</div>
<svg class="a" style="left:0;top:413.25px" width="21" height="21"><path d="M7.2 6.7 H12.8 M8.6 6.7 Q8.4 8.5 8.6 10.4 L6.5 12.6 V13.3 H13.6 V12.6 L11.5 10.4 Q11.7 8.5 11.5 6.7 M10.05 13.3 V17.2" fill="none" stroke="#a9a9a9" stroke-width="1"/></svg>
<div class="a" style="left:531.2px;top:417.65px;width:12.6px;height:12.6px;border:2.1px solid #3a3a3a;box-sizing:border-box"></div>
<div class="a" style="left:939.2px;top:419.85px;width:3px;height:8.4px;border-left:1.7px solid #3a3a3a;border-top:1.2px solid #3a3a3a;border-bottom:1.2px solid #3a3a3a"></div>
<div class="a" style="left:524.5px;top:435.00px;width:416.5px;height:21.75px;background:#fdf7e9"></div>
<div class="a" style="left:0px;top:455.75px;width:941px;height:1px;background:#e3e3e3"></div>
<div class="tx" style='left:26.60px;top:440.71px;font-size:11.60px;line-height:11.60px;color:#3a3a3a;font-family:"Liberation Mono", monospace;transform:scaleX(0.8922);transform-origin:0 0'>ETIQ_PREL</div>
<div class="tx" style='left:209.90px;top:440.71px;font-size:11.60px;line-height:11.60px;color:#3a3a3a;font-family:"Liberation Mono", monospace;transform:scaleX(0.8922);transform-origin:0 0'>BK0HP54</div>
<div class="tx" style='left:626.90px;top:440.71px;font-size:11.60px;line-height:11.60px;color:#3a3a3a;font-family:"Liberation Mono", monospace;transform:scaleX(0.8922);transform-origin:0 0'>Zebra ZT411</div>
<svg class="a" style="left:0;top:435.00px" width="21" height="21"><path d="M7.2 6.7 H12.8 M8.6 6.7 Q8.4 8.5 8.6 10.4 L6.5 12.6 V13.3 H13.6 V12.6 L11.5 10.4 Q11.7 8.5 11.5 6.7 M10.05 13.3 V17.2" fill="none" stroke="#a9a9a9" stroke-width="1"/></svg>
<div class="a" style="left:531.2px;top:439.40px;width:12.6px;height:12.6px;border:2.1px solid #3a3a3a;box-sizing:border-box"></div>
<div class="a" style="left:939.2px;top:441.60px;width:3px;height:8.4px;border-left:1.7px solid #3a3a3a;border-top:1.2px solid #3a3a3a;border-bottom:1.2px solid #3a3a3a"></div>
<div class="a" style="left:524.5px;top:456.75px;width:416.5px;height:21.75px;background:#fdf7e9"></div>
<div class="a" style="left:0px;top:477.50px;width:941px;height:1px;background:#e3e3e3"></div>
<div class="tx" style='left:26.60px;top:462.46px;font-size:11.60px;line-height:11.60px;color:#3a3a3a;font-family:"Liberation Mono", monospace;transform:scaleX(0.8922);transform-origin:0 0'>ETIQ_PREL</div>
<div class="tx" style='left:209.90px;top:462.46px;font-size:11.60px;line-height:11.60px;color:#3a3a3a;font-family:"Liberation Mono", monospace;transform:scaleX(0.8922);transform-origin:0 0'>BK0HP54_WEB</div>
<div class="tx" style='left:626.90px;top:462.46px;font-size:11.60px;line-height:11.60px;color:#3a3a3a;font-family:"Liberation Mono", monospace;transform:scaleX(0.8922);transform-origin:0 0'>Zebra ZT411</div>
<svg class="a" style="left:0;top:456.75px" width="21" height="21"><path d="M7.2 6.7 H12.8 M8.6 6.7 Q8.4 8.5 8.6 10.4 L6.5 12.6 V13.3 H13.6 V12.6 L11.5 10.4 Q11.7 8.5 11.5 6.7 M10.05 13.3 V17.2" fill="none" stroke="#a9a9a9" stroke-width="1"/></svg>
<div class="a" style="left:531.2px;top:461.15px;width:12.6px;height:12.6px;border:2.1px solid #3a3a3a;box-sizing:border-box"></div>
<div class="a" style="left:939.2px;top:463.35px;width:3px;height:8.4px;border-left:1.7px solid #3a3a3a;border-top:1.2px solid #3a3a3a;border-bottom:1.2px solid #3a3a3a"></div>
<div class="a" style="left:524.5px;top:478.50px;width:416.5px;height:21.75px;background:#fdf7e9"></div>
<div class="a" style="left:0px;top:499.25px;width:941px;height:1px;background:#e3e3e3"></div>
<div class="tx" style='left:26.60px;top:484.21px;font-size:11.60px;line-height:11.60px;color:#3a3a3a;font-family:"Liberation Mono", monospace;transform:scaleX(0.8922);transform-origin:0 0'>ETIQ_PREL_MAG</div>
<div class="tx" style='left:209.90px;top:484.21px;font-size:11.60px;line-height:11.60px;color:#3a3a3a;font-family:"Liberation Mono", monospace;transform:scaleX(0.8922);transform-origin:0 0'>BK0HP54</div>
<div class="tx" style='left:626.90px;top:484.21px;font-size:11.60px;line-height:11.60px;color:#3a3a3a;font-family:"Liberation Mono", monospace;transform:scaleX(0.8922);transform-origin:0 0'>Zebra ZM400 3</div>
<svg class="a" style="left:0;top:478.50px" width="21" height="21"><path d="M7.2 6.7 H12.8 M8.6 6.7 Q8.4 8.5 8.6 10.4 L6.5 12.6 V13.3 H13.6 V12.6 L11.5 10.4 Q11.7 8.5 11.5 6.7 M10.05 13.3 V17.2" fill="none" stroke="#a9a9a9" stroke-width="1"/></svg>
<div class="a" style="left:531.2px;top:482.90px;width:12.6px;height:12.6px;border:2.1px solid #3a3a3a;box-sizing:border-box"></div>
<div class="a" style="left:939.2px;top:485.10px;width:3px;height:8.4px;border-left:1.7px solid #3a3a3a;border-top:1.2px solid #3a3a3a;border-bottom:1.2px solid #3a3a3a"></div>
<div class="a" style="left:524.5px;top:500.25px;width:416.5px;height:21.75px;background:#fdf7e9"></div>
<div class="a" style="left:0px;top:521.00px;width:941px;height:1px;background:#e3e3e3"></div>
<div class="tx" style='left:26.60px;top:505.96px;font-size:11.60px;line-height:11.60px;color:#3a3a3a;font-family:"Liberation Mono", monospace;transform:scaleX(0.8922);transform-origin:0 0'>ETIQ_PREL_MAG</div>
<div class="tx" style='left:209.90px;top:505.96px;font-size:11.60px;line-height:11.60px;color:#3a3a3a;font-family:"Liberation Mono", monospace;transform:scaleX(0.8922);transform-origin:0 0'>BK0HP54_WEB</div>
<div class="tx" style='left:626.90px;top:505.96px;font-size:11.60px;line-height:11.60px;color:#3a3a3a;font-family:"Liberation Mono", monospace;transform:scaleX(0.8922);transform-origin:0 0'>Zebra ZT411 3</div>
<svg class="a" style="left:0;top:500.25px" width="21" height="21"><path d="M7.2 6.7 H12.8 M8.6 6.7 Q8.4 8.5 8.6 10.4 L6.5 12.6 V13.3 H13.6 V12.6 L11.5 10.4 Q11.7 8.5 11.5 6.7 M10.05 13.3 V17.2" fill="none" stroke="#a9a9a9" stroke-width="1"/></svg>
<div class="a" style="left:531.2px;top:504.65px;width:12.6px;height:12.6px;border:2.1px solid #3a3a3a;box-sizing:border-box"></div>
<div class="a" style="left:939.2px;top:506.85px;width:3px;height:8.4px;border-left:1.7px solid #3a3a3a;border-top:1.2px solid #3a3a3a;border-bottom:1.2px solid #3a3a3a"></div>
<div class="a" style="left:524.5px;top:522.00px;width:416.5px;height:21.75px;background:#fdf7e9"></div>
<div class="a" style="left:0px;top:542.75px;width:941px;height:1px;background:#e3e3e3"></div>
<div class="tx" style='left:26.60px;top:527.71px;font-size:11.60px;line-height:11.60px;color:#3a3a3a;font-family:"Liberation Mono", monospace;transform:scaleX(0.8922);transform-origin:0 0'>ETIQ_REASSORT</div>
<div class="tx" style='left:209.90px;top:527.71px;font-size:11.60px;line-height:11.60px;color:#3a3a3a;font-family:"Liberation Mono", monospace;transform:scaleX(0.8922);transform-origin:0 0'>BK0HP54</div>
<div class="tx" style='left:626.90px;top:527.71px;font-size:11.60px;line-height:11.60px;color:#3a3a3a;font-family:"Liberation Mono", monospace;transform:scaleX(0.8922);transform-origin:0 0'>Zebra ZT411</div>
<svg class="a" style="left:0;top:522.00px" width="21" height="21"><path d="M7.2 6.7 H12.8 M8.6 6.7 Q8.4 8.5 8.6 10.4 L6.5 12.6 V13.3 H13.6 V12.6 L11.5 10.4 Q11.7 8.5 11.5 6.7 M10.05 13.3 V17.2" fill="none" stroke="#a9a9a9" stroke-width="1"/></svg>
<div class="a" style="left:531.2px;top:526.40px;width:12.6px;height:12.6px;border:2.1px solid #3a3a3a;box-sizing:border-box"></div>
<div class="a" style="left:939.2px;top:528.60px;width:3px;height:8.4px;border-left:1.7px solid #3a3a3a;border-top:1.2px solid #3a3a3a;border-bottom:1.2px solid #3a3a3a"></div>
<div class="a" style="left:524.5px;top:543.75px;width:416.5px;height:21.75px;background:#fdf7e9"></div>
<div class="a" style="left:0px;top:564.50px;width:941px;height:1px;background:#e3e3e3"></div>
<div class="tx" style='left:26.60px;top:549.46px;font-size:11.60px;line-height:11.60px;color:#3a3a3a;font-family:"Liberation Mono", monospace;transform:scaleX(0.8922);transform-origin:0 0'>ETIQ_REASSORT</div>
<div class="tx" style='left:209.90px;top:549.46px;font-size:11.60px;line-height:11.60px;color:#3a3a3a;font-family:"Liberation Mono", monospace;transform:scaleX(0.8922);transform-origin:0 0'>BK0HP54_WEB</div>
<div class="tx" style='left:626.90px;top:549.46px;font-size:11.60px;line-height:11.60px;color:#3a3a3a;font-family:"Liberation Mono", monospace;transform:scaleX(0.8922);transform-origin:0 0'>Zebra ZT411</div>
<svg class="a" style="left:0;top:543.75px" width="21" height="21"><path d="M7.2 6.7 H12.8 M8.6 6.7 Q8.4 8.5 8.6 10.4 L6.5 12.6 V13.3 H13.6 V12.6 L11.5 10.4 Q11.7 8.5 11.5 6.7 M10.05 13.3 V17.2" fill="none" stroke="#a9a9a9" stroke-width="1"/></svg>
<div class="a" style="left:531.2px;top:548.15px;width:12.6px;height:12.6px;border:2.1px solid #3a3a3a;box-sizing:border-box"></div>
<div class="a" style="left:939.2px;top:550.35px;width:3px;height:8.4px;border-left:1.7px solid #3a3a3a;border-top:1.2px solid #3a3a3a;border-bottom:1.2px solid #3a3a3a"></div>
<div class="a" style="left:524.5px;top:565.50px;width:416.5px;height:21.75px;background:#fdf7e9"></div>
<div class="a" style="left:0px;top:586.25px;width:941px;height:1px;background:#e3e3e3"></div>
<div class="tx" style='left:26.60px;top:571.21px;font-size:11.60px;line-height:11.60px;color:#3a3a3a;font-family:"Liberation Mono", monospace;transform:scaleX(0.8922);transform-origin:0 0'>ETIQ_REC</div>
<div class="tx" style='left:209.90px;top:571.21px;font-size:11.60px;line-height:11.60px;color:#3a3a3a;font-family:"Liberation Mono", monospace;transform:scaleX(0.8922);transform-origin:0 0'>BK0HP54</div>
<div class="tx" style='left:626.90px;top:571.21px;font-size:11.60px;line-height:11.60px;color:#3a3a3a;font-family:"Liberation Mono", monospace;transform:scaleX(0.8922);transform-origin:0 0'>Zebra ZT411</div>
<svg class="a" style="left:0;top:565.50px" width="21" height="21"><path d="M7.2 6.7 H12.8 M8.6 6.7 Q8.4 8.5 8.6 10.4 L6.5 12.6 V13.3 H13.6 V12.6 L11.5 10.4 Q11.7 8.5 11.5 6.7 M10.05 13.3 V17.2" fill="none" stroke="#a9a9a9" stroke-width="1"/></svg>
<div class="a" style="left:531.2px;top:569.90px;width:12.6px;height:12.6px;border:2.1px solid #3a3a3a;box-sizing:border-box"></div>
<div class="a" style="left:939.2px;top:572.10px;width:3px;height:8.4px;border-left:1.7px solid #3a3a3a;border-top:1.2px solid #3a3a3a;border-bottom:1.2px solid #3a3a3a"></div>
<div class="a" style="left:524.5px;top:587.25px;width:416.5px;height:21.75px;background:#fdf7e9"></div>
<div class="a" style="left:0px;top:608.00px;width:941px;height:1px;background:#e3e3e3"></div>
<div class="tx" style='left:26.60px;top:592.96px;font-size:11.60px;line-height:11.60px;color:#3a3a3a;font-family:"Liberation Mono", monospace;transform:scaleX(0.8922);transform-origin:0 0'>ETIQ_REC</div>
<div class="tx" style='left:209.90px;top:592.96px;font-size:11.60px;line-height:11.60px;color:#3a3a3a;font-family:"Liberation Mono", monospace;transform:scaleX(0.8922);transform-origin:0 0'>BK0HP54_WEB</div>
<div class="tx" style='left:626.90px;top:592.96px;font-size:11.60px;line-height:11.60px;color:#3a3a3a;font-family:"Liberation Mono", monospace;transform:scaleX(0.8922);transform-origin:0 0'>Zebra ZT411</div>
<svg class="a" style="left:0;top:587.25px" width="21" height="21"><path d="M7.2 6.7 H12.8 M8.6 6.7 Q8.4 8.5 8.6 10.4 L6.5 12.6 V13.3 H13.6 V12.6 L11.5 10.4 Q11.7 8.5 11.5 6.7 M10.05 13.3 V17.2" fill="none" stroke="#a9a9a9" stroke-width="1"/></svg>
<div class="a" style="left:531.2px;top:591.65px;width:12.6px;height:12.6px;border:2.1px solid #3a3a3a;box-sizing:border-box"></div>
<div class="a" style="left:939.2px;top:593.85px;width:3px;height:8.4px;border-left:1.7px solid #3a3a3a;border-top:1.2px solid #3a3a3a;border-bottom:1.2px solid #3a3a3a"></div>
<div class="a" style="left:524.5px;top:609.00px;width:416.5px;height:21.75px;background:#fdf7e9"></div>
<div class="a" style="left:0px;top:629.75px;width:941px;height:1px;background:#e3e3e3"></div>
<div class="tx" style='left:26.60px;top:614.71px;font-size:11.60px;line-height:11.60px;color:#3a3a3a;font-family:"Liberation Mono", monospace;transform:scaleX(0.8922);transform-origin:0 0'>ETIQ_UTIL</div>
<div class="tx" style='left:209.90px;top:614.71px;font-size:11.60px;line-height:11.60px;color:#3a3a3a;font-family:"Liberation Mono", monospace;transform:scaleX(0.8922);transform-origin:0 0'>BK0HP54</div>
<div class="tx" style='left:626.90px;top:614.71px;font-size:11.60px;line-height:11.60px;color:#3a3a3a;font-family:"Liberation Mono", monospace;transform:scaleX(0.8922);transform-origin:0 0'>Zebra GX430T 17</div>
<svg class="a" style="left:0;top:609.00px" width="21" height="21"><path d="M7.2 6.7 H12.8 M8.6 6.7 Q8.4 8.5 8.6 10.4 L6.5 12.6 V13.3 H13.6 V12.6 L11.5 10.4 Q11.7 8.5 11.5 6.7 M10.05 13.3 V17.2" fill="none" stroke="#a9a9a9" stroke-width="1"/></svg>
<div class="a" style="left:531.2px;top:613.40px;width:12.6px;height:12.6px;border:2.1px solid #3a3a3a;box-sizing:border-box"></div>
<div class="a" style="left:939.2px;top:615.60px;width:3px;height:8.4px;border-left:1.7px solid #3a3a3a;border-top:1.2px solid #3a3a3a;border-bottom:1.2px solid #3a3a3a"></div>
<div class="a" style="left:524.5px;top:630.75px;width:416.5px;height:21.75px;background:#fdf7e9"></div>
<div class="a" style="left:0px;top:651.50px;width:941px;height:1px;background:#e3e3e3"></div>
<div class="tx" style='left:26.60px;top:636.46px;font-size:11.60px;line-height:11.60px;color:#3a3a3a;font-family:"Liberation Mono", monospace;transform:scaleX(0.8922);transform-origin:0 0'>ETIQ_UTIL</div>
<div class="tx" style='left:209.90px;top:636.46px;font-size:11.60px;line-height:11.60px;color:#3a3a3a;font-family:"Liberation Mono", monospace;transform:scaleX(0.8922);transform-origin:0 0'>BK0HP54_WEB</div>
<div class="tx" style='left:626.90px;top:636.46px;font-size:11.60px;line-height:11.60px;color:#3a3a3a;font-family:"Liberation Mono", monospace;transform:scaleX(0.8922);transform-origin:0 0'>Zebra ZT411</div>
<svg class="a" style="left:0;top:630.75px" width="21" height="21"><path d="M7.2 6.7 H12.8 M8.6 6.7 Q8.4 8.5 8.6 10.4 L6.5 12.6 V13.3 H13.6 V12.6 L11.5 10.4 Q11.7 8.5 11.5 6.7 M10.05 13.3 V17.2" fill="none" stroke="#a9a9a9" stroke-width="1"/></svg>
<div class="a" style="left:531.2px;top:635.15px;width:12.6px;height:12.6px;border:2.1px solid #3a3a3a;box-sizing:border-box"></div>
<div class="a" style="left:939.2px;top:637.35px;width:3px;height:8.4px;border-left:1.7px solid #3a3a3a;border-top:1.2px solid #3a3a3a;border-bottom:1.2px solid #3a3a3a"></div>
<div class="a" style="left:524.5px;top:652.50px;width:416.5px;height:21.75px;background:#fdf7e9"></div>
<div class="a" style="left:0px;top:673.25px;width:941px;height:1px;background:#e3e3e3"></div>
<div class="tx" style='left:26.60px;top:658.21px;font-size:11.60px;line-height:11.60px;color:#3a3a3a;font-family:"Liberation Mono", monospace;transform:scaleX(0.8922);transform-origin:0 0'>FACTURE</div>
<div class="tx" style='left:209.90px;top:658.21px;font-size:11.60px;line-height:11.60px;color:#3a3a3a;font-family:"Liberation Mono", monospace;transform:scaleX(0.8922);transform-origin:0 0'>BK0HP54</div>
<div class="tx" style='left:626.90px;top:658.21px;font-size:11.60px;line-height:11.60px;color:#3a3a3a;font-family:"Liberation Mono", monospace;transform:scaleX(0.8922);transform-origin:0 0'>PRO8100S-Expe</div>
<svg class="a" style="left:0;top:652.50px" width="21" height="21"><path d="M7.2 6.7 H12.8 M8.6 6.7 Q8.4 8.5 8.6 10.4 L6.5 12.6 V13.3 H13.6 V12.6 L11.5 10.4 Q11.7 8.5 11.5 6.7 M10.05 13.3 V17.2" fill="none" stroke="#a9a9a9" stroke-width="1"/></svg>
<div class="a" style="left:531.2px;top:656.90px;width:12.6px;height:12.6px;border:2.1px solid #3a3a3a;box-sizing:border-box"></div>
<div class="a" style="left:939.2px;top:659.10px;width:3px;height:8.4px;border-left:1.7px solid #3a3a3a;border-top:1.2px solid #3a3a3a;border-bottom:1.2px solid #3a3a3a"></div>
<div class="a" style="left:524.5px;top:674.25px;width:416.5px;height:21.75px;background:#fdf7e9"></div>
<div class="a" style="left:0px;top:695.00px;width:941px;height:1px;background:#e3e3e3"></div>
<div class="tx" style='left:26.60px;top:679.96px;font-size:11.60px;line-height:11.60px;color:#3a3a3a;font-family:"Liberation Mono", monospace;transform:scaleX(0.8922);transform-origin:0 0'>FACTUREWEB</div>
<div class="tx" style='left:209.90px;top:679.96px;font-size:11.60px;line-height:11.60px;color:#3a3a3a;font-family:"Liberation Mono", monospace;transform:scaleX(0.8922);transform-origin:0 0'>BK0HP54</div>
<div class="tx" style='left:626.90px;top:679.96px;font-size:11.60px;line-height:11.60px;color:#3a3a3a;font-family:"Liberation Mono", monospace;transform:scaleX(0.8922);transform-origin:0 0'>MP4054-Expe_FACWEB</div>
<svg class="a" style="left:0;top:674.25px" width="21" height="21"><path d="M7.2 6.7 H12.8 M8.6 6.7 Q8.4 8.5 8.6 10.4 L6.5 12.6 V13.3 H13.6 V12.6 L11.5 10.4 Q11.7 8.5 11.5 6.7 M10.05 13.3 V17.2" fill="none" stroke="#a9a9a9" stroke-width="1"/></svg>
<div class="a" style="left:531.2px;top:678.65px;width:12.6px;height:12.6px;border:2.1px solid #3a3a3a;box-sizing:border-box"></div>
<div class="a" style="left:939.2px;top:680.85px;width:3px;height:8.4px;border-left:1.7px solid #3a3a3a;border-top:1.2px solid #3a3a3a;border-bottom:1.2px solid #3a3a3a"></div>
<div class="a" style="left:524.5px;top:696.00px;width:416.5px;height:21.75px;background:#fdf7e9"></div>
<div class="a" style="left:0px;top:716.75px;width:941px;height:1px;background:#e3e3e3"></div>
<div class="tx" style='left:26.60px;top:701.71px;font-size:11.60px;line-height:11.60px;color:#3a3a3a;font-family:"Liberation Mono", monospace;transform:scaleX(0.8922);transform-origin:0 0'>FACTUREWEB</div>
<div class="tx" style='left:209.90px;top:701.71px;font-size:11.60px;line-height:11.60px;color:#3a3a3a;font-family:"Liberation Mono", monospace;transform:scaleX(0.8922);transform-origin:0 0'>BK0HP54_WEB</div>
<div class="tx" style='left:626.90px;top:701.71px;font-size:11.60px;line-height:11.60px;color:#3a3a3a;font-family:"Liberation Mono", monospace;transform:scaleX(0.8922);transform-origin:0 0'>MP4054-Expe_FACWEB</div>
<svg class="a" style="left:0;top:696.00px" width="21" height="21"><path d="M7.2 6.7 H12.8 M8.6 6.7 Q8.4 8.5 8.6 10.4 L6.5 12.6 V13.3 H13.6 V12.6 L11.5 10.4 Q11.7 8.5 11.5 6.7 M10.05 13.3 V17.2" fill="none" stroke="#a9a9a9" stroke-width="1"/></svg>
<div class="a" style="left:531.2px;top:700.40px;width:12.6px;height:12.6px;border:2.1px solid #3a3a3a;box-sizing:border-box"></div>
<div class="a" style="left:939.2px;top:702.60px;width:3px;height:8.4px;border-left:1.7px solid #3a3a3a;border-top:1.2px solid #3a3a3a;border-bottom:1.2px solid #3a3a3a"></div>
<div class="a" style="left:524.5px;top:717.75px;width:416.5px;height:21.75px;background:#fdf7e9"></div>
<div class="a" style="left:0px;top:738.50px;width:941px;height:1px;background:#e3e3e3"></div>
<div class="tx" style='left:26.60px;top:723.46px;font-size:11.60px;line-height:11.60px;color:#3a3a3a;font-family:"Liberation Mono", monospace;transform:scaleX(0.8922);transform-origin:0 0'>INTERCALAIRE</div>
<div class="tx" style='left:209.90px;top:723.46px;font-size:11.60px;line-height:11.60px;color:#3a3a3a;font-family:"Liberation Mono", monospace;transform:scaleX(0.8922);transform-origin:0 0'>BK0HP54</div>
<div class="tx" style='left:626.90px;top:723.46px;font-size:11.60px;line-height:11.60px;color:#3a3a3a;font-family:"Liberation Mono", monospace;transform:scaleX(0.8922);transform-origin:0 0'>PRO8100S-Expe</div>
<svg class="a" style="left:0;top:717.75px" width="21" height="21"><path d="M7.2 6.7 H12.8 M8.6 6.7 Q8.4 8.5 8.6 10.4 L6.5 12.6 V13.3 H13.6 V12.6 L11.5 10.4 Q11.7 8.5 11.5 6.7 M10.05 13.3 V17.2" fill="none" stroke="#a9a9a9" stroke-width="1"/></svg>
<div class="a" style="left:531.2px;top:722.15px;width:12.6px;height:12.6px;border:2.1px solid #3a3a3a;box-sizing:border-box"></div>
<div class="a" style="left:939.2px;top:724.35px;width:3px;height:8.4px;border-left:1.7px solid #3a3a3a;border-top:1.2px solid #3a3a3a;border-bottom:1.2px solid #3a3a3a"></div>
<div class="a" style="left:524.5px;top:739.50px;width:416.5px;height:21.75px;background:#fdf7e9"></div>
<div class="a" style="left:0px;top:760.25px;width:941px;height:1px;background:#e3e3e3"></div>
<div class="tx" style='left:26.60px;top:745.21px;font-size:11.60px;line-height:11.60px;color:#3a3a3a;font-family:"Liberation Mono", monospace;transform:scaleX(0.8922);transform-origin:0 0'>PLANCHE_PREL</div>
<div class="tx" style='left:209.90px;top:745.21px;font-size:11.60px;line-height:11.60px;color:#3a3a3a;font-family:"Liberation Mono", monospace;transform:scaleX(0.8922);transform-origin:0 0'>BK0HP54</div>
<div class="tx" style='left:626.90px;top:745.21px;font-size:11.60px;line-height:11.60px;color:#3a3a3a;font-family:"Liberation Mono", monospace;transform:scaleX(0.8922);transform-origin:0 0'>PRO8100S-Expe_PPREL</div>
<svg class="a" style="left:0;top:739.50px" width="21" height="21"><path d="M7.2 6.7 H12.8 M8.6 6.7 Q8.4 8.5 8.6 10.4 L6.5 12.6 V13.3 H13.6 V12.6 L11.5 10.4 Q11.7 8.5 11.5 6.7 M10.05 13.3 V17.2" fill="none" stroke="#a9a9a9" stroke-width="1"/></svg>
<div class="a" style="left:531.2px;top:743.90px;width:12.6px;height:12.6px;border:2.1px solid #3a3a3a;box-sizing:border-box"></div>
<div class="a" style="left:939.2px;top:746.10px;width:3px;height:8.4px;border-left:1.7px solid #3a3a3a;border-top:1.2px solid #3a3a3a;border-bottom:1.2px solid #3a3a3a"></div>
<div class="a" style="left:524.5px;top:761.25px;width:416.5px;height:21.75px;background:#fdf7e9"></div>
<div class="a" style="left:0px;top:782.00px;width:941px;height:1px;background:#e3e3e3"></div>
<div class="tx" style='left:26.60px;top:766.96px;font-size:11.60px;line-height:11.60px;color:#3a3a3a;font-family:"Liberation Mono", monospace;transform:scaleX(0.8922);transform-origin:0 0'>PLANCHE_PREL</div>
<div class="tx" style='left:209.90px;top:766.96px;font-size:11.60px;line-height:11.60px;color:#3a3a3a;font-family:"Liberation Mono", monospace;transform:scaleX(0.8922);transform-origin:0 0'>BK0HP54_WEB</div>
<div class="tx" style='left:626.90px;top:766.96px;font-size:11.60px;line-height:11.60px;color:#3a3a3a;font-family:"Liberation Mono", monospace;transform:scaleX(0.8922);transform-origin:0 0'>PRO8100S-Expe_PPREL</div>
<svg class="a" style="left:0;top:761.25px" width="21" height="21"><path d="M7.2 6.7 H12.8 M8.6 6.7 Q8.4 8.5 8.6 10.4 L6.5 12.6 V13.3 H13.6 V12.6 L11.5 10.4 Q11.7 8.5 11.5 6.7 M10.05 13.3 V17.2" fill="none" stroke="#a9a9a9" stroke-width="1"/></svg>
<div class="a" style="left:531.2px;top:765.65px;width:12.6px;height:12.6px;border:2.1px solid #3a3a3a;box-sizing:border-box"></div>
<div class="a" style="left:939.2px;top:767.85px;width:3px;height:8.4px;border-left:1.7px solid #3a3a3a;border-top:1.2px solid #3a3a3a;border-bottom:1.2px solid #3a3a3a"></div>
<div class="a" style="left:20.5px;top:0px;width:1px;height:763px;background:rgba(0,0,0,.105)"></div>
<div class="a" style="left:204.0px;top:0px;width:1px;height:763px;background:rgba(0,0,0,.105)"></div>
<div class="a" style="left:524.0px;top:0px;width:1px;height:763px;background:rgba(0,0,0,.105)"></div>
<div class="a" style="left:621.0px;top:0px;width:1px;height:763px;background:rgba(0,0,0,.105)"></div>
<div class="a" style="left:933.0px;top:0px;width:1px;height:763px;background:rgba(0,0,0,.105)"></div>
<div class="a" style="left:931.2px;top:2px;width:7.6px;height:710px;background:rgba(110,110,110,.42);border-radius:4px"></div>
<div class="a" style="left:24px;top:755px;width:615px;height:7px;background:rgba(120,120,120,.45);border-radius:4px"></div>
</div>
<div class="a" style="left:273px;top:133px;width:941px;height:22px;background:#41779f;border-bottom:1px solid #2d6088;border-top:1px solid #6b93b2"></div>
<div class="a" style="left:273px;top:919px;width:941px;height:21.4px;background:#41779f"></div>
<div class="a" style="left:293.5px;top:133px;width:1px;height:22px;background:#2d6088"></div>
<div class="a" style="left:293.5px;top:919px;width:1px;height:21.4px;background:#2d6088"></div>
<div class="a" style="left:477.0px;top:133px;width:1px;height:22px;background:#2d6088"></div>
<div class="a" style="left:477.0px;top:919px;width:1px;height:21.4px;background:#2d6088"></div>
<div class="a" style="left:797.0px;top:133px;width:1px;height:22px;background:#2d6088"></div>
<div class="a" style="left:797.0px;top:919px;width:1px;height:21.4px;background:#2d6088"></div>
<div class="a" style="left:894.0px;top:133px;width:1px;height:22px;background:#2d6088"></div>
<div class="a" style="left:894.0px;top:919px;width:1px;height:21.4px;background:#2d6088"></div>
<div class="a" style="left:1206.0px;top:133px;width:1px;height:22px;background:#2d6088"></div>
<div class="a" style="left:1206.0px;top:919px;width:1px;height:21.4px;background:#2d6088"></div>
<svg class="a" style="left:281px;top:136.3px" width="6" height="16"><g fill="#c0d3e2"><circle cx="3" cy="2.5" r="1.3"/><circle cx="3" cy="7.7" r="1.3"/><circle cx="3" cy="13" r="1.3"/></g></svg>
<svg class="a" style="left:881px;top:136.3px" width="6" height="16"><g fill="#c0d3e2"><circle cx="3" cy="2.5" r="1.3"/><circle cx="3" cy="7.7" r="1.3"/><circle cx="3" cy="13" r="1.3"/></g></svg>
<svg class="a" style="left:1192.5px;top:136.3px" width="6" height="16"><g fill="#c0d3e2"><circle cx="3" cy="2.5" r="1.3"/><circle cx="3" cy="7.7" r="1.3"/><circle cx="3" cy="13" r="1.3"/></g></svg>
<div id="t26" class="tx" style='left:302.70px;top:138.81px;font-size:11.05px;line-height:11.05px;color:#ffffff;font-family:"Liberation Sans", sans-serif;font-weight:normal;transform:scaleX(0.9039);transform-origin:0 0;'>Code Routage</div>
<div id="t27" class="tx" style='left:485.90px;top:138.81px;font-size:11.05px;line-height:11.05px;color:#ffffff;font-family:"Liberation Sans", sans-serif;font-weight:normal;transform:scaleX(0.9345);transform-origin:0 0;'>Poste</div>
<div id="t28" class="tx" style='left:805.50px;top:138.81px;font-size:11.05px;line-height:11.05px;color:#ffffff;font-family:"Liberation Sans", sans-serif;font-weight:normal;transform:scaleX(0.9002);transform-origin:0 0;'>Désactivée ?</div>
<div id="t29" class="tx" style='left:902.00px;top:138.81px;font-size:11.05px;line-height:11.05px;color:#ffffff;font-family:"Liberation Sans", sans-serif;font-weight:normal;transform:scaleX(0.9681);transform-origin:0 0;'>Imprimante</div>
<svg class="a" style="left:461px;top:140px" width="12" height="8"><path d="M0.5 7 L5.7 0.8 L10.9 7 Z" fill="#fff"/></svg>
<svg class="a" style="left:781px;top:140px" width="12" height="8"><path d="M0.5 7 L5.7 0.8 L10.9 7 Z" fill="#fff"/></svg>
</body></html>
